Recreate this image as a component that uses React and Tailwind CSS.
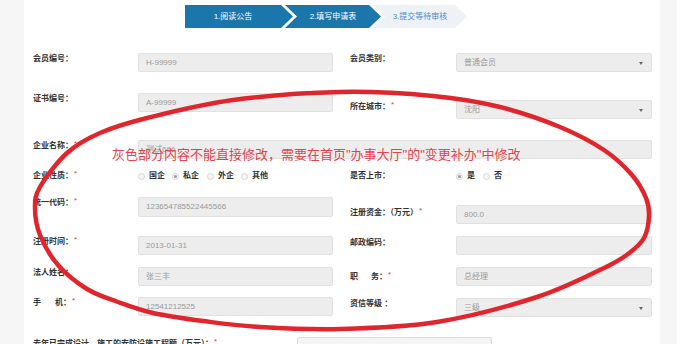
import React from "react";

const PTS = [
  [340, 92], [433, 96], [500, 107], [560, 127], [604, 150], [632, 175], [646, 198],
  [649, 216], [644, 238], [628, 254], [604, 268], [537, 297], [437, 322], [340, 329],
  [260, 327], [203, 321], [153, 313], [118, 302], [87, 289], [58, 265], [40, 235],
  [35, 208], [40, 187], [67, 153], [100, 133], [147, 118], [233, 100],
];

function closedPath(p) {
  const n = p.length;
  let d = `M${p[0][0]},${p[0][1]}`;
  for (let i = 0; i < n; i++) {
    const p0 = p[(i - 1 + n) % n];
    const p1 = p[i];
    const p2 = p[(i + 1) % n];
    const p3 = p[(i + 2) % n];
    const c1 = [p1[0] + (p2[0] - p0[0]) / 6, p1[1] + (p2[1] - p0[1]) / 6];
    const c2 = [p2[0] - (p3[0] - p1[0]) / 6, p2[1] - (p3[1] - p1[1]) / 6];
    d += ` C${c1[0].toFixed(1)},${c1[1].toFixed(1)} ${c2[0].toFixed(1)},${c2[1].toFixed(1)} ${p2[0]},${p2[1]}`;
  }
  return d + " Z";
}

function L({ children, req, className = "" }) {
  return (
    <div className={`text-[8px] leading-[12px] font-bold text-[#333] whitespace-nowrap ${className}`}>
      {children}
      {req && <span className="text-[#e4393c] font-normal relative top-[-2px] ml-[1px]">*</span>}
    </div>
  );
}

function Input({ value, w = "w-[195px]", select, className = "" }) {
  return (
    <div
      className={`relative h-[19px] bg-[#ededed] border border-[#e1e1e1] rounded-[2px] pl-[7px] flex items-center text-[8px] text-[#9a9a9a] ${w} ${className}`}
    >
      {value}
      {select && (
        <span className="absolute right-[8px] top-[8px] w-0 h-0 border-x-[2.5px] border-x-transparent border-t-[3px] border-t-[#666]" />
      )}
    </div>
  );
}

function Radio({ label, checked, w }) {
  return (
    <div className={`flex items-center ${w}`}>
      <span className="w-[7px] h-[7px] rounded-full border border-[#d6d6d6] bg-[#f6f6f6] flex items-center justify-center">
        {checked && <span className="w-[3px] h-[3px] rounded-full bg-[#9a9a9a]" />}
      </span>
      <span className="ml-[4px] text-[8px] font-bold text-[#333]">{label}</span>
    </div>
  );
}

export default function App() {
  return (
    <div className="relative w-[677px] h-[344px] overflow-hidden bg-[#f6f6f6] font-['Liberation_Sans','Noto_Sans_CJK_SC',sans-serif]">
      <div className="ml-[24px] w-[636px] h-[344px] bg-white pl-[9px] pt-[5px]">
        {/* stepper */}
        <div className="flex h-[23px] ml-[152px] text-[8px] leading-[23px]">
          <div className="w-[108px] bg-[#1a76ab] text-white pr-[12px] text-center [clip-path:polygon(0_0,96px_0,100%_50%,96px_100%,0_100%)]">
            1.阅读公告
          </div>
          <div className="-ml-[8px] w-[96px] bg-[#1a76ab] text-white px-[12px] text-center [clip-path:polygon(0_0,84px_0,100%_50%,84px_100%,0_100%,12px_50%)]">
            2.填写申请表
          </div>
          <div className="-ml-[8px] w-[94px] bg-[#eef1f5] text-[#4a8fc6] px-[12px] text-center [clip-path:polygon(0_0,82px_0,100%_50%,82px_100%,0_100%,12px_50%)]">
            3.提交等待审核
          </div>
        </div>

        <div className="mt-[25px] flex flex-col">
          {/* row 1 */}
          <div className="flex h-[40px]">
            <div className="flex w-[317px]">
              <L className="w-[105px]">会员编号：</L>
              <Input value="H-99999" />
            </div>
            <div className="flex">
              <L className="w-[106px]">会员类别：</L>
              <Input value="普通会员" w="w-[196px]" select />
            </div>
          </div>
          {/* row 2 */}
          <div className="flex h-[47px]">
            <div className="flex w-[317px]">
              <L className="w-[105px]">证书编号：</L>
              <Input value="A-99999" />
            </div>
            <div className="flex mt-[7px]">
              <L className="w-[106px] pt-[1px]" req>所在城市：</L>
              <Input value="沈阳" w="w-[196px]" select />
            </div>
          </div>
          {/* row 3 */}
          <div className="flex h-[28px]">
            <L className="w-[105px]" req>企业名称：</L>
            <Input value="测试666" w="w-[514px]" className="h-[18px]" />
          </div>
          {/* row 4 */}
          <div className="flex h-[29px]">
            <div className="flex w-[317px] h-[16px] items-center">
              <L className="w-[105px]" req>企业性质：</L>
              <div className="flex">
                <Radio label="国企" w="w-[34px]" />
                <Radio label="私企" checked w="w-[35px]" />
                <Radio label="外企" w="w-[34px]" />
                <Radio label="其他" w="w-[34px]" />
              </div>
            </div>
            <div className="flex h-[16px] items-center">
              <L className="w-[106px]">是否上市：</L>
              <div className="flex">
                <Radio label="是" checked w="w-[27px]" />
                <Radio label="否" w="w-[27px]" />
              </div>
            </div>
          </div>
          {/* row 5 */}
          <div className="flex h-[39px]">
            <div className="flex w-[317px]">
              <L className="w-[105px]" req>统一代码：</L>
              <Input value="123654785522445566" className="h-[20px]" />
            </div>
            <div className="flex mt-[8px]">
              <L className="w-[106px] pt-[2px]" req>注册资金：（万元）</L>
              <Input value="800.0" w="w-[196px]" className="h-[18px]" />
            </div>
          </div>
          {/* row 6 */}
          <div className="flex h-[31px]">
            <div className="flex w-[317px]">
              <L className="w-[105px]" req>注册时间：</L>
              <Input value="2013-01-31" className="h-[18px]" />
            </div>
            <div className="flex">
              <L className="w-[106px] pt-[1px]">邮政编码：</L>
              <Input value="" w="w-[196px]" className="h-[18px]" />
            </div>
          </div>
          {/* row 7 */}
          <div className="flex h-[30px]">
            <div className="flex w-[317px]">
              <L className="w-[105px]">法人姓名：</L>
              <Input value="张三丰" className="h-[18px]" />
            </div>
            <div className="flex">
              <L className="w-[106px] pt-[4px]" req>
                职<span className="inline-block w-[13px]" />务：
              </L>
              <Input value="总经理" w="w-[196px]" className="h-[18px]" />
            </div>
          </div>
          {/* row 8 */}
          <div className="flex h-[40px]">
            <div className="flex w-[317px]">
              <L className="w-[105px]" req>
                手<span className="inline-block w-[14px]" />机：
              </L>
              <Input value="12541212525" className="h-[18px]" />
            </div>
            <div className="flex mt-[1px]">
              <L className="w-[106px]">资信等级 ：</L>
              <Input value="三级" w="w-[196px]" select className="h-[18px]" />
            </div>
          </div>
          {/* row 9 */}
          <div className="flex">
            <L className="w-[264px] pt-[1px]" req>去年已完成设计、施工的安防设施工程额（万元）：</L>
            <div className="h-[19px] w-[195px] bg-[#f4f4f4] border border-[#dcdcdc] rounded-[2px] pl-[7px] text-[8px] leading-[17px] text-[#666]">
              0.0
            </div>
          </div>
        </div>
      </div>

      {/* red annotation text */}
      <div className="absolute left-[112px] top-[146px] text-[13px] leading-[18px] text-[#e4434c] whitespace-nowrap">
        灰色部分内容不能直接修改，需要在首页"办事大厅"的"变更补办"中修改
      </div>

      {/* hand-drawn red ellipse */}
      <svg className="absolute left-0 top-0 pointer-events-none" width="677" height="344" viewBox="0 0 677 344">
        <path d={closedPath(PTS)} fill="none" stroke="#e0262c" strokeWidth="4.5" strokeLinejoin="round" />
      </svg>
    </div>
  );
}
